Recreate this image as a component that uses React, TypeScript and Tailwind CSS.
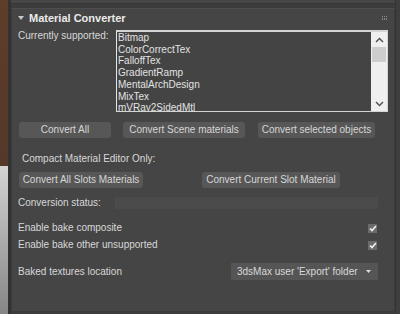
import React from "react";

const items = [
  "Bitmap",
  "ColorCorrectTex",
  "FalloffTex",
  "GradientRamp",
  "MentalArchDesign",
  "MixTex",
  "mVRay2SidedMtl",
];

function Btn({ w, children }: { w: string; children: React.ReactNode }) {
  return (
    <div
      className={`${w} h-[16px] rounded-[3px] bg-[#575757] text-[#d6d6d6] text-[10px] leading-[16px] flex items-center justify-center whitespace-nowrap`}
    >
      {children}
    </div>
  );
}

function Check() {
  return (
    <div className="w-[9px] h-[9px] bg-[#6b6b6b] flex items-center justify-center">
      <svg width="8" height="7" viewBox="0 0 8 7">
        <path d="M1 3.5 L3 5.5 L7 1" stroke="#f2f2f2" strokeWidth="1.6" fill="none" />
      </svg>
    </div>
  );
}

export default function App() {
  return (
    <div
      className="w-[400px] h-[314px] bg-[#3c3c3c] flex overflow-hidden text-[#d8d8d8]"
      style={{ fontFamily: '"Liberation Sans", Arial, sans-serif' }}
    >
      <div className="w-[8px] flex flex-col shrink-0">
        <div className="h-[166px] bg-gradient-to-b from-[#5e3d2a] to-[#55382a]" />
        <div className="flex-1 bg-gradient-to-b from-[#d4d4d4] to-[#868686]" />
      </div>
      <div className="w-[3px] bg-[#333333] shrink-0" />
      <div className="flex flex-col w-[384px] shrink-0">
        <div className="h-[4px] bg-[#474747] border-b border-[#363636]" />
        <div className="h-[4px]" />
        <div className="h-[304px] bg-[#454545] border border-[#3a3a3a] border-t-[#4d4d4d] flex flex-col pl-[6px]">
          {/* header */}
          <div className="h-[17px] flex items-center relative">
            <svg width="6" height="4" viewBox="0 0 6 4" className="ml-[0px]">
              <path d="M0 0 L6 0 L3 4 Z" fill="#c8c8c8" />
            </svg>
            <span className="ml-[5px] text-[11px] font-bold text-[#ebebeb] leading-[12px]">
              Material Converter
            </span>
            <div className="ml-auto mr-[7px] grid grid-cols-3 gap-[1px]">
              {Array.from({ length: 6 }).map((_, i) => (
                <div key={i} className="w-[1px] h-[1.5px] bg-[#8a8a8a]" />
              ))}
            </div>
          </div>
          {/* list row */}
          <div className="mt-[4px] flex">
            <div className="w-[98px] text-[10px] leading-[12px] whitespace-nowrap">Currently supported:</div>
            <div className="w-[272px] h-[82px] border border-t-2 border-[#d4d4d4] border-l-[#e6e6e6] bg-[#444444] flex overflow-hidden">
              <div className="flex-1 pl-[1px] overflow-hidden">
                {items.map((t) => (
                  <div key={t} className="text-[10px] leading-[11.7px] text-[#e2e2e2] whitespace-nowrap">
                    {t}
                  </div>
                ))}
              </div>
              <div className="w-[16px] bg-[#efefef] flex flex-col items-center">
                <svg width="9" height="6" viewBox="0 0 9 6" className="mt-[5px]">
                  <path d="M1 5 L4.5 1.5 L8 5" stroke="#555" strokeWidth="1.5" fill="none" />
                </svg>
                <div className="mt-[4px] w-[14px] h-[15px] bg-[#cdcdcd]" />
                <div className="flex-1" />
                <svg width="9" height="6" viewBox="0 0 9 6" className="mb-[4px]">
                  <path d="M1 1 L4.5 4.5 L8 1" stroke="#555" strokeWidth="1.5" fill="none" />
                </svg>
              </div>
            </div>
          </div>
          {/* buttons row */}
          <div className="mt-[10px] ml-[1px] flex">
            <Btn w="w-[92px]">Convert All</Btn>
            <div className="w-[12px]" />
            <Btn w="w-[122px]">Convert Scene materials</Btn>
            <div className="w-[13px]" />
            <Btn w="w-[117px]">Convert selected objects</Btn>
          </div>
          <div className="mt-[15px] pl-[4px] text-[10px] leading-[12px]">Compact Material Editor Only:</div>
          <div className="mt-[7px] ml-[1px] flex">
            <Btn w="w-[124px]">Convert All Slots Materials</Btn>
            <div className="w-[59px]" />
            <Btn w="w-[138px]">Convert Current Slot Material</Btn>
          </div>
          <div className="mt-[9px] h-[12px] flex items-center">
            <div className="w-[97px] text-[10px] leading-[12px]">Conversion status:</div>
            <div className="w-[263px] h-[12px] bg-[#4b4b4b]" />
          </div>
          <div className="mt-[13px] h-[12px] w-[359px] flex items-center">
            <div className="flex-1 text-[10px] leading-[12px]">Enable bake composite</div>
            <Check />
          </div>
          <div className="mt-[5px] h-[12px] w-[359px] flex items-center">
            <div className="flex-1 text-[10px] leading-[12px]">Enable bake other unsupported</div>
            <Check />
          </div>
          <div className="mt-[12px] h-[17px] w-[360px] flex items-center">
            <div className="flex-1 text-[10px] leading-[12px]">Baked textures location</div>
            <div className="w-[147px] h-[17px] bg-[#555555] flex items-center pl-[6px] pr-[7px]">
              <span className="flex-1 text-[10px] leading-[12px] text-[#dadada] whitespace-nowrap">
                3dsMax user 'Export' folder
              </span>
              <svg width="5" height="3" viewBox="0 0 5 3">
                <path d="M0 0 L5 0 L2.5 3 Z" fill="#e0e0e0" />
              </svg>
            </div>
          </div>
        </div>
      </div>
      <div className="flex-1 bg-[#3e3e3e] border-l border-[#343434]" />
    </div>
  );
}
